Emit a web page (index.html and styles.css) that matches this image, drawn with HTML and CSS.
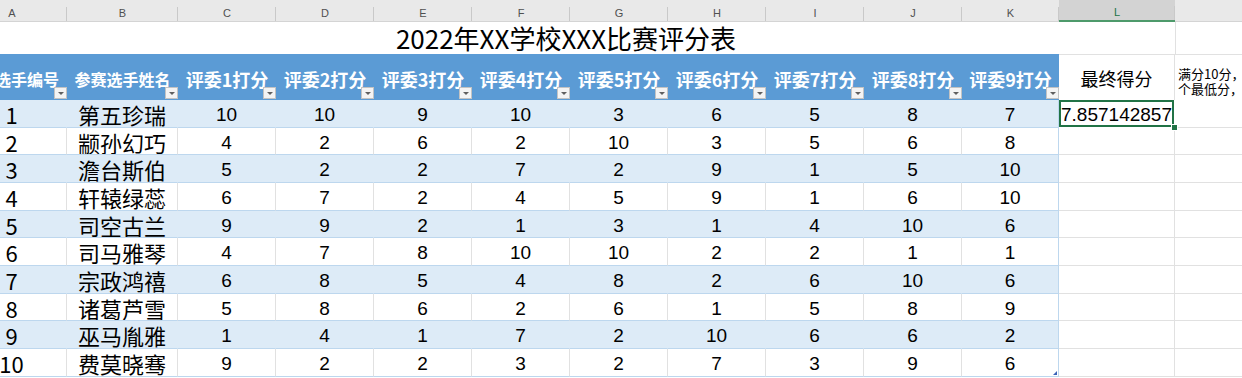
FILE: index.html
```html
<!DOCTYPE html>
<html lang="zh-CN">
<head>
<meta charset="utf-8">
<title>2022年XX学校XXX比赛评分表</title>
<link rel="stylesheet" href="styles.css">
</head>
<body>
<div class="viewport">
  <div class="sheet">
    <div class="ch">A</div><div class="ch">B</div><div class="ch">C</div><div class="ch">D</div><div class="ch">E</div><div class="ch">F</div><div class="ch">G</div><div class="ch">H</div><div class="ch">I</div><div class="ch">J</div><div class="ch">K</div><div class="ch sel">L</div><div class="ch">M</div>

    <div class="title">2022年XX学校XXX比赛评分表</div>
    <div class="title-m"></div>

    <div class="th th-a small">选手编号<span class="fb"></span></div>
    <div class="th small">参赛选手姓名<span class="fb"></span></div>
    <div class="th">评委1打分<span class="fb"></span></div>
    <div class="th">评委2打分<span class="fb"></span></div>
    <div class="th">评委3打分<span class="fb"></span></div>
    <div class="th">评委4打分<span class="fb"></span></div>
    <div class="th">评委5打分<span class="fb"></span></div>
    <div class="th">评委6打分<span class="fb"></span></div>
    <div class="th">评委7打分<span class="fb"></span></div>
    <div class="th">评委8打分<span class="fb"></span></div>
    <div class="th">评委9打分<span class="fb"></span></div>
    <div class="lh">最终得分</div>
    <div class="mh"><span>满分10分，去掉一个最高分和一</span><span>个最低分，其余分数取平均值。</span></div>

    <div class="row band"><div class="c id">1</div><div class="c nm">第五珍瑞</div><div class="c">10</div><div class="c">10</div><div class="c">9</div><div class="c">10</div><div class="c">3</div><div class="c">6</div><div class="c">5</div><div class="c">8</div><div class="c k">7</div><div class="g score">7.857142857</div><div class="g"></div></div>
    <div class="row"><div class="c id">2</div><div class="c nm">颛孙幻巧</div><div class="c">4</div><div class="c">2</div><div class="c">6</div><div class="c">2</div><div class="c">10</div><div class="c">3</div><div class="c">5</div><div class="c">6</div><div class="c k">8</div><div class="g"></div><div class="g"></div></div>
    <div class="row band"><div class="c id">3</div><div class="c nm">澹台斯伯</div><div class="c">5</div><div class="c">2</div><div class="c">2</div><div class="c">7</div><div class="c">2</div><div class="c">9</div><div class="c">1</div><div class="c">5</div><div class="c k">10</div><div class="g"></div><div class="g"></div></div>
    <div class="row"><div class="c id">4</div><div class="c nm">轩辕绿蕊</div><div class="c">6</div><div class="c">7</div><div class="c">2</div><div class="c">4</div><div class="c">5</div><div class="c">9</div><div class="c">1</div><div class="c">6</div><div class="c k">10</div><div class="g"></div><div class="g"></div></div>
    <div class="row band"><div class="c id">5</div><div class="c nm">司空古兰</div><div class="c">9</div><div class="c">9</div><div class="c">2</div><div class="c">1</div><div class="c">3</div><div class="c">1</div><div class="c">4</div><div class="c">10</div><div class="c k">6</div><div class="g"></div><div class="g"></div></div>
    <div class="row"><div class="c id">6</div><div class="c nm">司马雅琴</div><div class="c">4</div><div class="c">7</div><div class="c">8</div><div class="c">10</div><div class="c">10</div><div class="c">2</div><div class="c">2</div><div class="c">1</div><div class="c k">1</div><div class="g"></div><div class="g"></div></div>
    <div class="row band"><div class="c id">7</div><div class="c nm">宗政鸿禧</div><div class="c">6</div><div class="c">8</div><div class="c">5</div><div class="c">4</div><div class="c">8</div><div class="c">2</div><div class="c">6</div><div class="c">10</div><div class="c k">6</div><div class="g"></div><div class="g"></div></div>
    <div class="row"><div class="c id">8</div><div class="c nm">诸葛芦雪</div><div class="c">5</div><div class="c">8</div><div class="c">6</div><div class="c">2</div><div class="c">6</div><div class="c">1</div><div class="c">5</div><div class="c">8</div><div class="c k">9</div><div class="g"></div><div class="g"></div></div>
    <div class="row band"><div class="c id">9</div><div class="c nm">巫马胤雅</div><div class="c">1</div><div class="c">4</div><div class="c">1</div><div class="c">7</div><div class="c">2</div><div class="c">10</div><div class="c">6</div><div class="c">6</div><div class="c k">2</div><div class="g"></div><div class="g"></div></div>
    <div class="row"><div class="c id">10</div><div class="c nm">费莫晓骞</div><div class="c">9</div><div class="c">2</div><div class="c">2</div><div class="c">3</div><div class="c">2</div><div class="c">7</div><div class="c">3</div><div class="c">9</div><div class="c k last">6</div><div class="g"></div><div class="g"></div></div>
  </div>
</div>
</body>
</html>
```

FILE: styles.css
```css
html, body {
  margin: 0;
  padding: 0;
  background: #ffffff;
}

body {
  width: 1242px;
  height: 378px;
  overflow: hidden;
  font-family: "Noto Sans CJK SC", "Noto Sans", sans-serif;
  color: #000;
}

.viewport {
  width: 1242px;
  height: 378px;
  overflow: hidden;
}

.sheet {
  display: grid;
  grid-template-columns: 110px 111px repeat(8, 98px) 97px 116px 200px;
  grid-template-rows: 22px 32px 46px 28px 27px 28px 28px 27px 28px 28px 27px 28px 28px;
  margin-left: -43px;
  width: 1461px;
}

.sheet > div,
.row > div {
  box-sizing: border-box;
  min-width: 0;
}

.row {
  display: contents;
}

/* column letters */
.ch {
  background-color: #e9e9e9;
  background-image: linear-gradient(#c9c9c9, #c9c9c9);
  background-repeat: no-repeat;
  background-position: right bottom;
  background-size: 1px 14px;
  border-bottom: 1px solid #d4d4d4;
  font-family: "Liberation Sans", Arial, sans-serif;
  font-size: 11px;
  line-height: 1;
  color: #505050;
  display: flex;
  align-items: center;
  justify-content: center;
  padding-top: 5px;
}

.ch.sel {
  background-color: #d3d3d3;
  color: #217346;
  border-bottom: 2px solid #4e9a6b;
}

/* title row */
.title {
  grid-column: 1 / 13;
  display: flex;
  align-items: flex-end;
  justify-content: center;
  font-size: 26px;
  line-height: 1;
  padding-bottom: 3px;
  white-space: nowrap;
}

.title-m {
  border-left: 1px solid #e1e1e1;
}

/* table header */
.th {
  position: relative;
  background: #5b9bd5;
  color: #ffffff;
  font-weight: 700;
  font-size: 18px;
  line-height: 1.2;
  display: flex;
  align-items: center;
  justify-content: center;
  padding-top: 6px;
  white-space: nowrap;
  overflow: hidden;
}

.th.small {
  font-size: 16px;
}

.th-a {
  padding-left: 30px;
}

.fb {
  position: absolute;
  right: 0;
  bottom: 1px;
  width: 13px;
  height: 12px;
  box-sizing: border-box;
  background: #f4f4f4;
  border: 1px solid #c3c3c3;
  display: flex;
  align-items: center;
  justify-content: center;
}

.fb::after {
  content: "";
  width: 0;
  height: 0;
  border-left: 3px solid transparent;
  border-right: 3px solid transparent;
  border-top: 3px solid #606060;
  margin-top: 1px;
}

.lh {
  border-top: 1px solid #e1e1e1;
  border-right: 1px solid #e1e1e1;
  display: flex;
  align-items: center;
  justify-content: center;
  font-size: 18px;
  line-height: 1.2;
  padding-top: 3px;
}

.mh {
  border-top: 1px solid #e1e1e1;
  display: flex;
  flex-direction: column;
  font-size: 13px;
  line-height: 15px;
  padding: 11px 0 0 3px;
  white-space: nowrap;
  overflow: hidden;
}

/* data */
.c {
  display: flex;
  align-items: center;
  justify-content: center;
  padding-top: 2px;
  border-bottom: 1px solid #bdd7ee;
  border-right: 1px solid #e1e1e1;
  font-family: "Liberation Sans", Arial, sans-serif;
  font-size: 19px;
  line-height: 1;
  white-space: nowrap;
  overflow: hidden;
}

.band .c {
  background: #ddebf7;
  border-right-color: #ddebf7;
}

.c.k,
.band .c.k {
  border-right: 1px solid #bdd7ee;
}

.c.id {
  font-family: "Noto Sans CJK SC", sans-serif;
  font-size: 22px;
  padding-top: 1px;
}

.c.nm {
  font-family: "Noto Sans CJK SC", sans-serif;
  font-size: 22px;
  padding-top: 1px;
}

.c.last {
  position: relative;
}

.c.last::after {
  content: "";
  position: absolute;
  right: 1px;
  bottom: 1px;
  width: 0;
  height: 0;
  border-left: 4px solid transparent;
  border-bottom: 4px solid #3a62b8;
}

.g {
  border-right: 1px solid #e1e1e1;
  border-bottom: 1px solid #e1e1e1;
  background: #fff;
}

.g.score {
  position: relative;
  display: flex;
  align-items: center;
  justify-content: center;
  padding-top: 2px;
  font-family: "Liberation Sans", Arial, sans-serif;
  font-size: 19px;
  line-height: 1;
  box-shadow: inset 0 0 0 2px #217346;
  border-color: transparent;
  white-space: nowrap;
}

.g.score::after {
  content: "";
  position: absolute;
  right: -4px;
  bottom: -4px;
  width: 5px;
  height: 5px;
  background: #217346;
  border: 1px solid #fff;
}
```
